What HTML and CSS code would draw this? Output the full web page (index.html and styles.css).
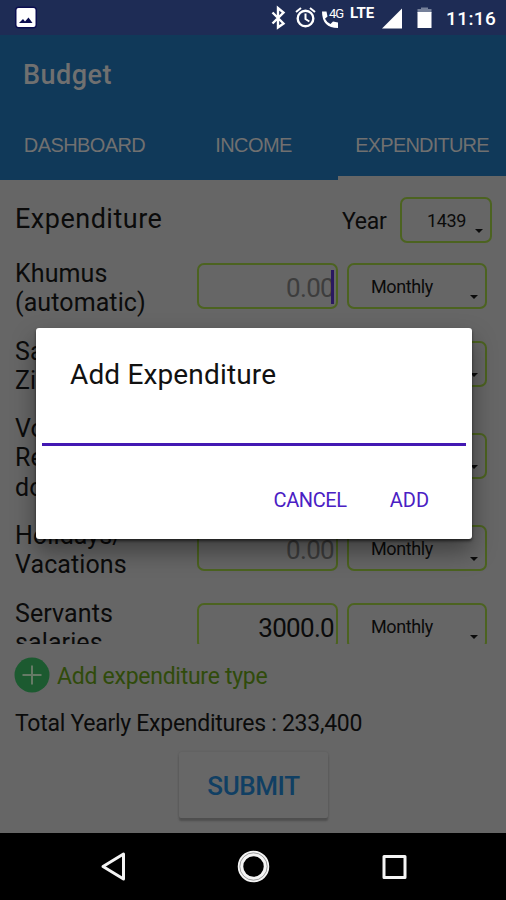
FILE: index.html
```html
<!DOCTYPE html>
<html lang="en">
<head>
<meta charset="utf-8">
<title>Budget</title>
<link rel="stylesheet" href="styles.css">
</head>
<body>
<div class="screen">
  <div class="status">
    <svg class="status-icons" width="506" height="35" viewBox="0 0 506 35">
      <rect x="15" y="6.500" width="22" height="22" rx="4" fill="#0b0e50"/>
      <rect x="16.500" y="8" width="19" height="19" rx="2" fill="#fff"/>
      <path d="M19 23l4-4 2 2.500 3.500-4 4 5.500z" fill="#0b0e50"/>
      <path d="M272.500 12.500l11 11-5.500 4V8l5.500 4.500-11 11" fill="none" stroke="#fff" stroke-width="2.400"/>
      <circle cx="305.500" cy="18.500" r="7.800" fill="none" stroke="#fff" stroke-width="2.400"/>
      <path d="M305.500 13.500v5.500l3.800 2.500M296 12l5-4M315 12l-5-4" fill="none" stroke="#fff" stroke-width="2"/>
      <path d="M322 11.500h4.500l1 5-2.500 2.300q2 4 5.500 5.200l2.500-2.500 5 1v5.500q-16 0-16-16.500z" fill="#fff"/>
      <path d="M402 8.500v20h-20z" fill="#fff"/>
      <path d="M421 9v-1.500h7V9h3.500v4H417.500V9z" fill="#75809a"/>
      <rect x="417.500" y="12" width="14" height="16" fill="#fff"/>
    </svg>
    <span class="net4g">4G</span><span class="lte">LTE</span><span class="clock">11:16</span>
  </div>
  <header class="appbar">
    <h1 class="title">Budget</h1>
    <nav class="tabs">
      <span class="tab">DASHBOARD</span>
      <span class="tab">INCOME</span>
      <span class="tab active">EXPENDITURE</span>
    </nav>
  </header>
  <main class="content">
    <div class="heading">
      <h2 class="section">Expenditure</h2>
      <span class="year">Year</span>
      <div class="select select-year"><span>1439</span><i class="caret"></i></div>
    </div>
    <div class="rows">
      <div class="row"><div class="label">Khumus<br>(automatic)</div><div class="amount hint focus">0.00</div><div class="select"><span>Monthly</span><i class="caret"></i></div></div>
      <div class="row"><div class="label">Sa<br>Zi</div><div class="amount"></div><div class="select"><i class="caret"></i></div></div>
      <div class="row"><div class="label">Vo<br>Re<br>do</div><div class="amount"></div><div class="select"><i class="caret"></i></div></div>
      <div class="row"><div class="label">Holidays/<br>Vacations</div><div class="amount hint">0.00</div><div class="select"><span>Monthly</span><i class="caret"></i></div></div>
      <div class="row"><div class="label">Servants<br>salaries</div><div class="amount">3000.0</div><div class="select"><span>Monthly</span><i class="caret"></i></div></div>
    </div>
    <div class="addtype">
      <svg width="36" height="36" viewBox="0 0 36 36"><circle cx="18" cy="18" r="17.500" fill="#1c5a30"/><path d="M18 8.500v19M8.500 18h19" stroke="#667a66" stroke-width="2"/></svg>
      <span>Add expenditure type</span>
    </div>
    <div class="total">Total Yearly Expenditures : 233,400</div>
    <div class="submit">SUBMIT</div>
  </main>
  <footer class="navbar">
    <svg width="506" height="66" viewBox="0 0 506 66" fill="none" stroke="#f4f4f4" stroke-width="3" stroke-linejoin="round">
      <path d="M123.500 21v25L103 33.500z"/>
      <circle cx="253.500" cy="33.500" r="13" stroke-width="5.500"/>
      <circle cx="253.500" cy="33.500" r="13.700" stroke="#777" stroke-width="0.700"/>
      <rect x="384" y="23.500" width="21" height="21"/>
    </svg>
  </footer>
  <section class="dialog">
    <h3 class="dialog-title">Add Expenditure</h3>
    <div class="dialog-input"></div>
    <div class="dialog-actions"><span class="cancel">CANCEL</span><span class="add">ADD</span></div>
  </section>
</div>
</body>
</html>
```

FILE: styles.css
```css
* { box-sizing: border-box; }
body { margin: 0; font-family: Roboto, sans-serif; }
h1, h2, h3 { margin: 0; font-weight: 400; }
.screen { position: relative; width: 506px; height: 900px; overflow: hidden; background: #666; color: #0b0b0b; display: flex; flex-direction: column; }
.status { position: relative; height: 35px; flex: none; background: #1e2c55; color: #fff; }
.status-icons { display: block; }
.net4g, .lte, .clock { position: absolute; white-space: nowrap; }
.net4g { left: 329px; top: 6px; font-size: 13px; line-height: 15px; letter-spacing: -1px; }
.lte { left: 350px; top: 5px; font-size: 15px; line-height: 17px; font-weight: 700; }
.clock { left: 446px; top: 7px; font-size: 19px; line-height: 23px; font-weight: 500; letter-spacing: .4px; }
.appbar { height: 145px; flex: none; background: #103959; color: #707070; display: flex; flex-direction: column; justify-content: space-between; }
.title { padding: 24px 0 0 23px; font-size: 27px; line-height: 32px; font-weight: 500; letter-spacing: .5px; }
.tabs { display: grid; grid-template-columns: 169px 169px 168px; height: 70px; font: 20px/24px "Liberation Sans", sans-serif; letter-spacing: -.6px; }
.tab { padding-top: 23px; text-align: center; white-space: nowrap; }
.active { border-bottom: 4px solid #666; letter-spacing: -.8px; }
.content { height: 653px; flex: none; }
.heading { display: flex; align-items: center; height: 78px; padding: 2px 14px 0 15px; }
.section { width: 327px; font-size: 27px; line-height: 32px; padding-bottom: 3px; letter-spacing: .5px; }
.year { width: 58px; font-size: 23px; padding-top: 2px; letter-spacing: -.3px; }
.select, .amount { position: relative; height: 46px; border: 2px solid #4c6320; border-radius: 7px; }
.select { width: 140px; padding-left: 22px; font-size: 18px; line-height: 44px; letter-spacing: -.4px; }
.select-year { width: 92px; padding-left: 25px; }
.caret { position: absolute; right: 7px; bottom: 8px; border: 4px solid transparent; border-top-color: #0b0b0b; border-bottom: 0; }
.rows { height: 386px; overflow: hidden; display: flex; flex-direction: column; gap: 19px; }
.row { display: grid; grid-template-columns: 182px 141px 140px; padding-left: 15px; align-items: center; flex: none; }
.row .select { margin-left: 9px; top: -1px; }
.row .amount { top: -1px; }
.label { position: relative; top: 1px; font-size: 25px; line-height: 29.300px; letter-spacing: .1px; }
.amount { padding-right: 2px; text-align: right; font-size: 26px; line-height: 46px; letter-spacing: -.7px; }
.hint { color: #3d3d3d; }
.focus::after { content: ""; position: absolute; right: 2px; top: 5px; width: 3px; height: 34px; background: #2a1860; }
.addtype { display: flex; align-items: center; gap: 7px; padding-left: 14px; margin-top: 13px; height: 36px; color: #304b0b; font-size: 23px; letter-spacing: -.27px; }
.addtype span { padding-top: 2px; }
.total { padding: 17px 0 0 15px; font-size: 23px; line-height: 28px; letter-spacing: -.27px; }
.submit { width: 149px; height: 66px; margin: 14px 0 0 179px; text-align: center; font-size: 26px; line-height: 69px; font-weight: 500; letter-spacing: -.4px; color: #103f63; background: #676767; border-radius: 2px; box-shadow: 0 3px 2px #4e4e4e, 0 0 2px #595959; }
.navbar { height: 67px; flex: none; background: #000; }
.dialog { position: absolute; left: 36px; top: 328px; width: 436px; height: 211px; padding: 30px 6px 0; background: #fff; border-radius: 3px; box-shadow: 0 12px 24px rgba(0,0,0,.4), 0 2px 3px rgba(0,0,0,.55); }
.dialog-title { padding-left: 28px; font-size: 28px; line-height: 34px; letter-spacing: .15px; color: #111; }
.dialog-input { height: 54px; border-bottom: 3px solid #4318b3; }
.dialog-actions { display: flex; justify-content: flex-end; gap: 43px; padding: 42px 37px 0 0; font-size: 20px; line-height: 24px; color: #4a20c4; }
.cancel { letter-spacing: -.4px; }
```
